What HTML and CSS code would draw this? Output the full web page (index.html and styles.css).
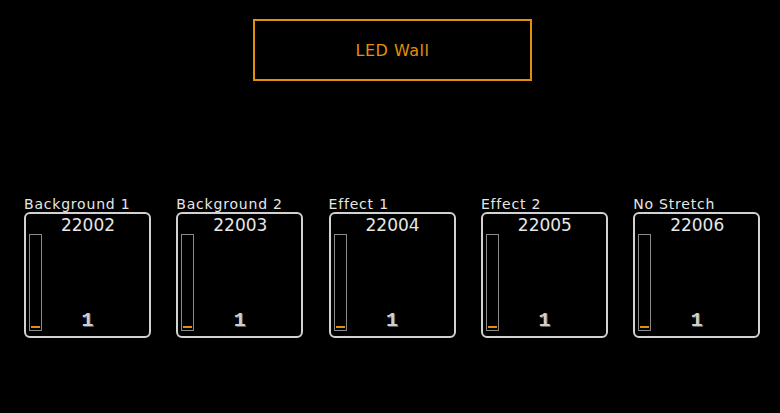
FILE: index.html
```html
<!DOCTYPE html>
<html lang="en">
<head>
    <meta charset="UTF-8">
    <meta name="viewport" content="width=device-width, initial-scale=1.0">
    <title>LED Wall</title>
    <link rel="stylesheet" href="styles.css">
</head>
<body>
    <div class="header">
        <div class="title-box">LED Wall</div>
    </div>

    <div class="layers">
        <div class="layer">
            <div class="layer-name">Background 1</div>
            <div class="layer-card">
                <div class="layer-id">22002</div>
                <div class="layer-body">
                    <div class="level"><div class="level-fill"></div></div>
                    <div class="layer-count">1</div>
                </div>
            </div>
        </div>
        <div class="layer">
            <div class="layer-name">Background 2</div>
            <div class="layer-card">
                <div class="layer-id">22003</div>
                <div class="layer-body">
                    <div class="level"><div class="level-fill"></div></div>
                    <div class="layer-count">1</div>
                </div>
            </div>
        </div>
        <div class="layer">
            <div class="layer-name">Effect 1</div>
            <div class="layer-card">
                <div class="layer-id">22004</div>
                <div class="layer-body">
                    <div class="level"><div class="level-fill"></div></div>
                    <div class="layer-count">1</div>
                </div>
            </div>
        </div>
        <div class="layer">
            <div class="layer-name">Effect 2</div>
            <div class="layer-card">
                <div class="layer-id">22005</div>
                <div class="layer-body">
                    <div class="level"><div class="level-fill"></div></div>
                    <div class="layer-count">1</div>
                </div>
            </div>
        </div>
        <div class="layer">
            <div class="layer-name">No Stretch</div>
            <div class="layer-card">
                <div class="layer-id">22006</div>
                <div class="layer-body">
                    <div class="level"><div class="level-fill"></div></div>
                    <div class="layer-count">1</div>
                </div>
            </div>
        </div>
    </div>
</body>
</html>
```

FILE: styles.css
```css
body {
    margin: 0;
    background-color: #000;
    font-family: "DejaVu Sans", Verdana, sans-serif;
    color: #e6e6e6;
    height: 413px;
    overflow: hidden;
}

.header {
    padding: 19px 0 0 253px;
}

.title-box {
    width: 275px;
    height: 58px;
    border: 2px solid #e0900a;
    color: #e0900a;
    font-size: 16px;
    letter-spacing: 0.5px;
    display: flex;
    align-items: center;
    justify-content: center;
}

.layers {
    display: flex;
    gap: 25.3px;
    padding: 115px 0 0 24px;
}

.layer {
    width: 127px;
}

.layer-name {
    font-size: 14px;
    letter-spacing: 0.8px;
    line-height: 16px;
    height: 16px;
    white-space: nowrap;
}

.layer-card {
    box-sizing: border-box;
    height: 126px;
    border: 2px solid #d2d2d2;
    border-radius: 6px;
    display: flex;
    flex-direction: column;
}

.layer-id {
    text-align: center;
    font-size: 17px;
    line-height: 20px;
    padding: 1px 0 0 1px;
    margin-bottom: -1px;
}

.layer-body {
    position: relative;
    flex: 1;
    padding: 0 0 0 3px;
}

.level {
    box-sizing: border-box;
    width: 13px;
    height: 97px;
    border: 1px solid #8a8a8a;
    display: flex;
    align-items: flex-end;
    justify-content: center;
    padding-bottom: 2px;
}

.level-fill {
    width: 9px;
    height: 2px;
    background-color: #e0900a;
}

/* embossed "1" in the bottom middle of each card */
.layer-count {
    position: absolute;
    left: 0;
    right: 0;
    bottom: 6px;
    text-align: center;
    font-family: "Liberation Mono", monospace;
    font-weight: bold;
    font-size: 20px;
    line-height: 18px;
    color: #cfcfcf;
    text-shadow: 1px 1px 0 #5a5a5a;
}
```
